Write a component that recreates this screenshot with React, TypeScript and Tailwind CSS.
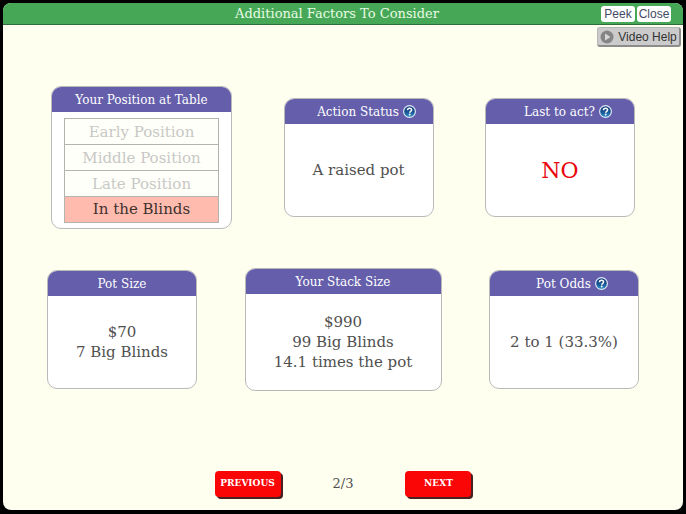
import React from "react";

interface CardProps {
	title: string;
	help?: boolean;
	wide?: string;
	children: React.ReactNode;
}

const positions = [
	"Early Position",
	"Middle Position",
	"Late Position",
	"In the Blinds",
];
const currentPosition = "In the Blinds";

const HelpIcon = () => (
	<svg viewBox="0 0 26 26" className="size-[13px]" aria-hidden="true">
		<defs>
			<linearGradient id="helpFill" x1="0" y1="0" x2="0" y2="1">
				<stop offset="0" stopColor="#123a78" />
				<stop offset="0.5" stopColor="#15508f" />
				<stop offset="1" stopColor="#2f8fc8" />
			</linearGradient>
		</defs>
		<circle cx="13" cy="13" r="13" fill="#dfe8f5" />
		<circle cx="13" cy="13" r="10.6" fill="url(#helpFill)" />
		<path
			d="M9 10.4c0-2.5 1.7-4 4.1-4s4.1 1.4 4.1 3.500c0 2.900-3.700 2.900-3.700 5.600"
			fill="none"
			stroke="#fff"
			strokeWidth="3"
		/>
		<circle cx="13.4" cy="19" r="1.900" fill="#fff" />
	</svg>
);

const Card = ({ title, help, wide = "w-[150px]", children }: CardProps) => (
	<section
		className={`${wide} overflow-hidden rounded-[10px] border border-[#b9b9b9] bg-white text-center`}
	>
		<h2
			className={`flex h-[25px] items-center justify-center gap-1 bg-[#645eab] text-xs text-white ${help ? "pl-4" : ""}`}
		>
			{title}
			{help && (
				<button type="button" aria-label={`Help: ${title}`}>
					<HelpIcon />
				</button>
			)}
		</h2>
		{children}
	</section>
);

const App = () => {
	return (
		<div className="flex min-h-screen bg-black p-[3px] pb-1 font-['Rockwell','DejaVu_Serif',serif]">
			<main className="flex flex-1 flex-col overflow-hidden rounded-lg bg-[#fffff0]">
				{/* Title bar */}
				<header className="grid h-[22px] grid-cols-[1fr_auto_1fr] items-center border-b border-[#2f6b3b] bg-[#46a857] pr-3">
					<h1 className="col-start-2 text-[13px] text-[#e9fbe4]">
						Additional Factors To Consider
					</h1>
					<div className="flex justify-end gap-0.5 font-['Liberation_Sans',sans-serif] text-xs text-[#3f4a63]">
						<button
							type="button"
							className="h-4 w-[34px] rounded-[3px] bg-white leading-4"
						>
							Peek
						</button>
						<button
							type="button"
							className="h-4 w-[34px] rounded-[3px] bg-white leading-4"
						>
							Close
						</button>
					</div>
				</header>

				<div className="flex justify-end px-0.5 pt-0.5">
					<button
						type="button"
						className="flex h-5 w-[84px] items-center justify-center gap-1 rounded-[3px] border border-r-2 border-b-2 border-[#b5b5b5] border-r-[#8c8c8c] border-b-[#8c8c8c] bg-[#cbcbcb] font-['Liberation_Sans',sans-serif] text-xs text-[#333]"
					>
						<svg viewBox="0 0 14 14" className="size-3.5 shrink-0" aria-hidden="true">
							<circle cx="7" cy="7" r="6.5" fill="#858585" />
							<path d="M5 3.5v7l5.5-3.5z" fill="#d6d6d6" />
						</svg>
						<span className="whitespace-nowrap">Video Help</span>
					</button>
				</div>

				{/* Factors */}
				<div className="mt-[39px] flex items-center justify-between px-12">
					<Card title="Your Position at Table" wide="w-[181px]">
						<ul className="mx-3 mt-1.5 mb-[5px] border border-[#b4b4ae] text-[15px] text-[#c8c8c5]">
							{positions.map((position) => (
								<li
									key={position}
									className={
										position === currentPosition
											? "h-[25px] bg-[#ffbcae] leading-[25px] text-[#40302e]"
											: "h-[26px] border-b border-[#b4b4ae] bg-[#fffffa] leading-[26px]"
									}
								>
									{position}
								</li>
							))}
						</ul>
					</Card>
					<Card title="Action Status" help>
						<p className="flex h-[92px] items-center justify-center text-[15px] text-[#505050]">
							A raised pot
						</p>
					</Card>
					<Card title="Last to act?" help>
						<p className="flex h-[92px] items-center justify-center text-[22px] text-[#e8060c]">
							NO
						</p>
					</Card>
				</div>

				<div className="mt-[39px] flex items-center justify-between px-11">
					<Card title="Pot Size">
						<p className="flex h-[92px] flex-col justify-center text-[15px] leading-5 text-[#505050]">
							<span>$70</span>
							<span>7 Big Blinds</span>
						</p>
					</Card>
					<Card title="Your Stack Size" wide="w-[197px]">
						<p className="flex h-[96px] flex-col justify-center text-[15px] leading-5 text-[#505050]">
							<span>$990</span>
							<span>99 Big Blinds</span>
							<span>14.1 times the pot</span>
						</p>
					</Card>
					<Card title="Pot Odds" help>
						<p className="flex h-[92px] items-center justify-center text-[15px] text-[#505050]">
							2 to 1 (33.3%)
						</p>
					</Card>
				</div>

				{/* Paging */}
				<nav className="mt-auto flex items-center justify-center gap-[52px] pb-[13px]">
					<button
						type="button"
						className="h-[26px] w-[66px] rounded-[4px] bg-[#fb0606] text-[9px] font-bold text-white shadow-[2px_2px_0_#4a2020]"
					>
						PREVIOUS
					</button>
					<span className="text-[13px] text-[#505050]">2/3</span>
					<button
						type="button"
						className="h-[26px] w-[66px] rounded-[4px] bg-[#fb0606] text-[9px] font-bold text-white shadow-[2px_2px_0_#4a2020]"
					>
						NEXT
					</button>
				</nav>
			</main>
		</div>
	);
};

export default App;
